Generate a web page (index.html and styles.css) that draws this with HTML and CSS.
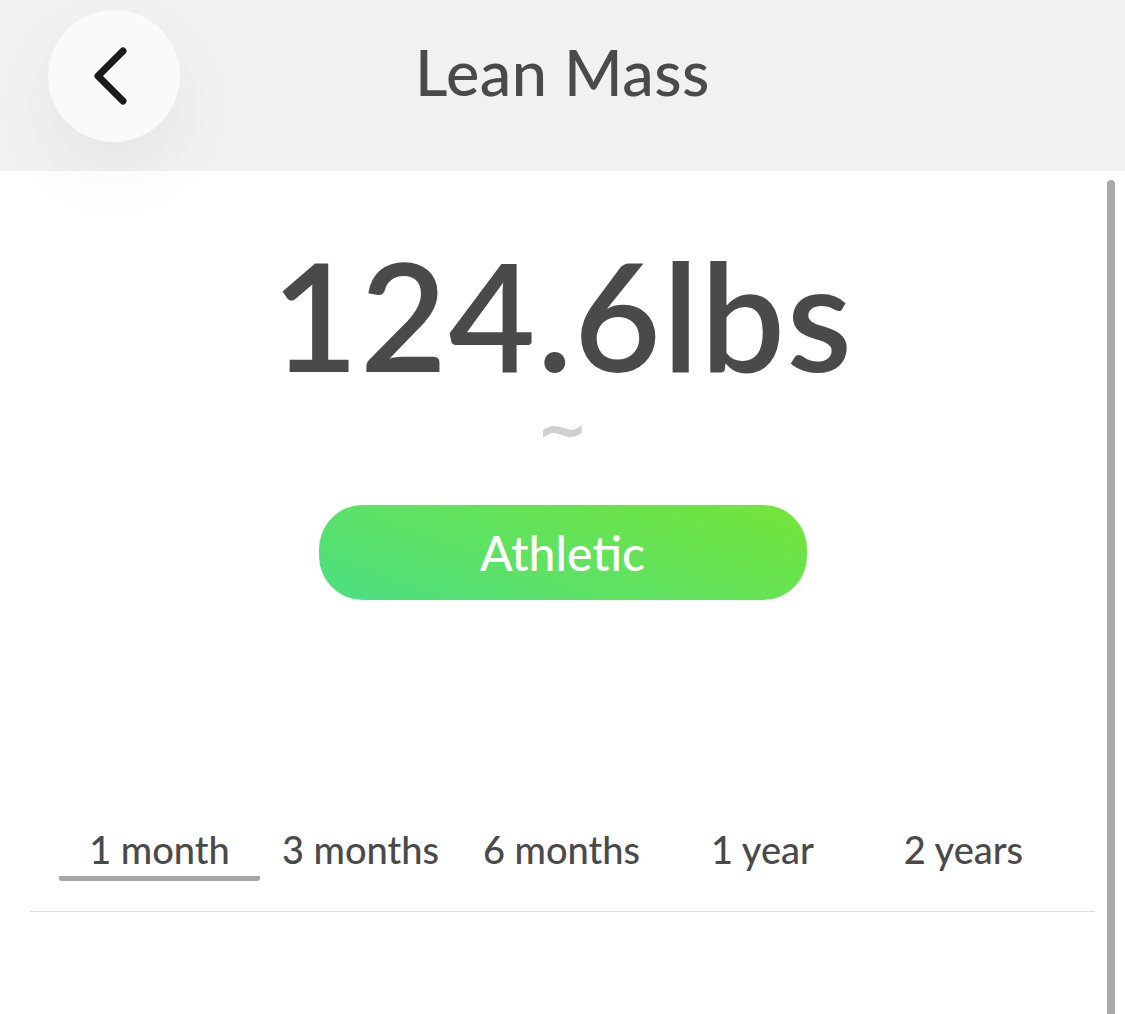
FILE: index.html
```html
<!DOCTYPE html>
<html lang="en">
<head>
<meta charset="utf-8">
<title>Lean Mass</title>
<link rel="stylesheet" href="styles.css">
</head>
<body>
<div class="screen">
  <header class="topbar">
    <div class="topbar-left">
      <button class="back-btn" aria-label="Back">
        <svg width="38" height="60" viewBox="0 0 38 60"><path d="M32 5 L7 30 L32 55" fill="none" stroke="#1a1a1a" stroke-width="7" stroke-linecap="round" stroke-linejoin="round"/></svg>
      </button>
    </div>
    <h1 class="title">Lean Mass</h1>
    <div class="topbar-right"></div>
  </header>
  <main class="content">
    <div class="value">124.6lbs</div>
    <div class="tilde">~</div>
    <div class="badge">Athletic</div>
    <nav class="tabs">
      <div class="tab active">1 month</div>
      <div class="tab">3 months</div>
      <div class="tab">6 months</div>
      <div class="tab">1 year</div>
      <div class="tab">2 years</div>
    </nav>
    <div class="divider"></div>
  </main>
  <div class="scrollbar"></div>
</div>
</body>
</html>
```
FILE: styles.css
```css
* { box-sizing: border-box; }
html, body {
  margin: 0;
  padding: 0;
  background: #ffffff;
}
body {
  font-family: "Lato", "Noto Sans", sans-serif;
  color: #4a4a4a;
}
.screen {
  position: relative;
  width: 1125px;
  height: 1014px;
  overflow: hidden;
  background: #ffffff;
}
.topbar {
  height: 171px;
  background: #f1f1f1;
  display: grid;
  grid-template-columns: 1fr auto 1fr;
  align-items: center;
}
.topbar-left {
  padding-left: 48px;
  display: flex;
  align-items: center;
}
.back-btn {
  width: 132px;
  height: 132px;
  border-radius: 50%;
  border: none;
  background: #fafafa;
  box-shadow: 0 30px 70px rgba(0, 0, 0, 0.05);
  display: flex;
  align-items: center;
  justify-content: center;
  padding: 0 8px 0 0;
  margin-top: -20px;
  position: relative;
  z-index: 2;
}
.title {
  margin: 0;
  font-weight: 500;
  font-size: 63px;
  color: #4a4a4a;
  letter-spacing: 0.5px;
  margin-top: -28px;
}
.content {
  display: flex;
  flex-direction: column;
  align-items: center;
}
.value {
  margin-top: 78px;
  font-size: 150px;
  line-height: 130px;
  font-weight: 600;
  color: #4a4a4a;
  letter-spacing: 1.5px;
}
.tilde {
  margin-top: 31px;
  font-family: "DejaVu Sans", sans-serif;
  font-size: 62px;
  line-height: 40px;
  height: 40px;
  color: #cfcfcf;
  font-weight: 700;
}
.badge {
  margin-top: 55px;
  width: 488px;
  height: 95px;
  border-radius: 44px;
  background: linear-gradient(20deg, #4cde82 0%, #63e35a 55%, #74e437 100%);
  color: #ffffff;
  font-size: 48px;
  font-weight: 500;
  display: flex;
  align-items: center;
  justify-content: center;
}
.tabs {
  margin-top: 225px;
  align-self: stretch;
  display: grid;
  grid-template-columns: repeat(5, 201px);
  padding-left: 59px;
}
.tab {
  text-align: center;
  font-size: 38px;
  font-weight: 500;
  line-height: 48px;
  color: #4a4a4a;
  padding-bottom: 3px;
  border-bottom: 5px solid transparent;
}
.tab.active {
  border-bottom-color: #a6a6a6;
  border-radius: 3px;
}
.divider {
  align-self: stretch;
  margin: 30px 30px 0;
  height: 1px;
  background: #dcdcdc;
}
.scrollbar {
  position: absolute;
  right: 10px;
  top: 180px;
  width: 8px;
  height: 860px;
  border-radius: 4px;
  background: #a9a9a9;
}
```
